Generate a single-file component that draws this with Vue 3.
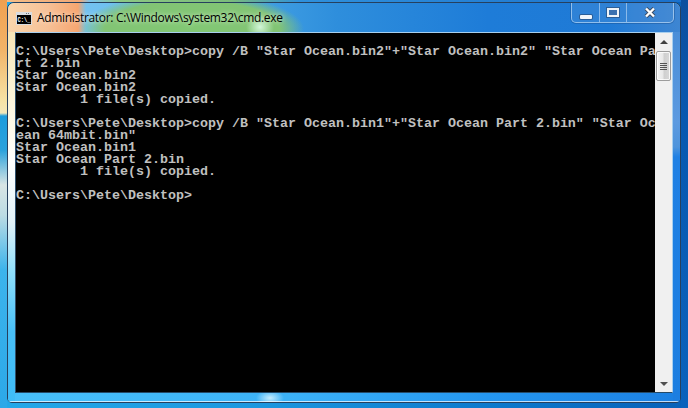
<script setup>
const rows = [
  '',
  'C:\\Users\\Pete\\Desktop>copy /B "Star Ocean.bin2"+"Star Ocean.bin2" "Star Ocean Pa',
  'rt 2.bin',
  'Star Ocean.bin2',
  'Star Ocean.bin2',
  '        1 file(s) copied.',
  '',
  'C:\\Users\\Pete\\Desktop>copy /B "Star Ocean.bin1"+"Star Ocean Part 2.bin" "Star Oc',
  'ean 64mbit.bin"',
  'Star Ocean.bin1',
  'Star Ocean Part 2.bin',
  '        1 file(s) copied.',
  '',
  'C:\\Users\\Pete\\Desktop>'
]
const output = rows.join('\n')
</script>

<template>
  <div class="desktop">
    <div class="window">
      <div class="titlebar">
        <svg class="app-icon" width="16" height="13" viewBox="0 0 16 13">
          <rect x="0" y="0" width="16" height="13" fill="#d8dce0" />
          <rect x="1" y="3" width="14" height="9" fill="#000" />
          <rect x="10" y="1" width="1" height="1" fill="#6a7078" />
          <rect x="12" y="1" width="1" height="1" fill="#6a7078" />
          <text x="1.5" y="10" class="icon-text" textLength="13" lengthAdjust="spacingAndGlyphs">C:\_</text>
        </svg>
        <span class="title">Administrator: C:\Windows\system32\cmd.exe</span>
        <div class="caption">
          <div class="cap cap-min"><span class="min-glyph"></span></div>
          <div class="cap cap-max"><span class="max-glyph"></span></div>
          <div class="cap cap-close">
            <svg width="12" height="11" viewBox="0 0 12 11">
              <path d="M2 1.5 L10 9.5 M10 1.5 L2 9.5" stroke="#3a4a60" stroke-width="4" fill="none" />
              <path d="M2 1.5 L10 9.5 M10 1.5 L2 9.5" stroke="#fff" stroke-width="2.4" fill="none" />
            </svg>
          </div>
        </div>
      </div>
      <div class="body">
        <div class="client">
          <pre class="console">{{ output }}</pre>
          <div class="scrollbar">
            <div class="arrow-btn"><span class="arrow-up"></span></div>
            <div class="thumb">
              <span class="grip"></span><span class="grip"></span><span class="grip"></span><span class="grip"></span>
            </div>
            <div class="track"></div>
            <div class="arrow-btn"><span class="arrow-down"></span></div>
          </div>
        </div>
      </div>
    </div>
  </div>
</template>

<style scoped>
.desktop {
  width: 688px;
  height: 408px;
  box-sizing: border-box;
  padding: 2px 7px 5px 7px;
  overflow: hidden;
  background:
    linear-gradient(180deg, #f0a050 0, #f2b468 50px, #f6e2a4 100px, #f4e8b8 113px, #1c9cdc 116px, #2aa2dc 150px, #d8e4e4 185px, #bcdce4 215px, #3cb4ec 270px, #2ca8e8 408px) left top / 7px 408px no-repeat,
    linear-gradient(180deg, #0d4f9e 0, #0858b0 120px, #0a62bc 408px) right top / 7px 408px no-repeat,
    linear-gradient(90deg, #f4c088 0, #f0a878 80px, #7cc4ee 90px, #8cc884 120px, #7cbc7c 230px, #2f90dc 300px, #1a70cc 688px) left top / 688px 2px no-repeat,
    linear-gradient(90deg, #24a8e8 0, #1c98e0 250px, #0c78cc 500px, #0860b8 688px);
}
.window {
  width: 674px;
  height: 401px;
  box-sizing: border-box;
  display: flex;
  flex-direction: column;
  border: 1px solid #26405e;
  border-radius: 7px 7px 5px 5px;
  box-shadow: inset 0 0 0 1px rgba(255, 255, 255, 0.72);
  overflow: hidden;
}
.titlebar {
  height: 29px;
  flex: none;
  display: flex;
  align-items: flex-start;
  padding: 8px 0 0 8px;
  box-sizing: border-box;
  background:
    radial-gradient(ellipse 14px 12px at 252px 24px, rgba(225, 255, 235, 0.85), rgba(225, 255, 235, 0) 100%),
    radial-gradient(ellipse 112px 36px at 184px 26px, #82c874 0, #82c474 78%, rgba(120, 190, 150, 0) 100%),
    linear-gradient(90deg, #fad6ac 0, #f6c096 40px, #f6a670 70px, #74c2f0 78px, #6cc0f0 110px, #44a2e4 240px, #2e8edc 330px, #1e7cd8 480px, #1f7ad6 600px, #3f86d2 674px);
}
.app-icon {
  flex: none;
  margin-top: 1px;
}
.icon-text {
  font-family: "Liberation Mono", monospace;
  font-size: 6.5px;
  font-weight: 700;
  fill: #fff;
}
.title {
  margin-left: 5px;
  margin-top: -1px;
  font-family: "Open Sans", sans-serif;
  font-size: 12px;
  line-height: 16px;
  letter-spacing: -0.32px;
  color: #000;
  white-space: nowrap;
  text-shadow: 0 0 5px rgba(255, 255, 255, 0.8);
}
.caption {
  margin-left: auto;
  margin-top: -8px;
  margin-right: 6px;
  width: 103px;
  height: 20px;
  display: flex;
  box-sizing: border-box;
  border: 1px solid rgba(225, 240, 255, 0.55);
  border-top: 0;
  border-radius: 0 0 5px 5px;
  background: rgba(90, 150, 215, 0.28);
  box-shadow: 0 0 0 1px rgba(20, 70, 130, 0.35);
}
.cap {
  height: 100%;
  display: flex;
  align-items: center;
  justify-content: center;
  box-sizing: border-box;
}
.cap-min {
  width: 28px;
  border-right: 1px solid rgba(225, 240, 255, 0.5);
}
.cap-max {
  width: 27px;
  border-right: 1px solid rgba(225, 240, 255, 0.5);
}
.cap-close {
  flex: 1;
}
.min-glyph {
  display: block;
  width: 12px;
  height: 4px;
  margin-top: 8px;
  background: #f2f6fa;
  box-shadow: 0 0 0 1px rgba(40, 70, 110, 0.6);
  border-radius: 1px;
}
.max-glyph {
  display: block;
  width: 12px;
  height: 9px;
  box-sizing: border-box;
  border: 2px solid #eef3f8;
  background: #3a70b0;
  box-shadow: 0 0 0 1px rgba(40, 70, 110, 0.6);
}
.body {
  flex: 1;
  min-height: 0;
  padding: 0 7px 9px 7px;
  box-sizing: border-box;
  background:
    linear-gradient(180deg, #f8e6b8 0, #fdf6dc 70px, #ffffff 130px, #e2f2f8 190px, #8fe0fc 240px, #48c0f8 300px, #3fbdf8 371px) left top / 7px 100% no-repeat,
    linear-gradient(180deg, #4a8ed8 0, #5c9ae0 90px, #4e94dc 115px, #1f80e4 125px, #1c7ee0 371px) right top / 7px 100% no-repeat,
    radial-gradient(ellipse 14px 8px at 262px 366px, rgba(230, 250, 255, 0.8), rgba(230, 250, 255, 0) 100%),
    linear-gradient(90deg, #48c0fa 0, #3cb2f8 280px, #2496f0 480px, #1c80e2 672px);
  box-shadow: inset 0 -1px 0 rgba(255, 255, 255, 0.72);
}
.client {
  height: 100%;
  display: flex;
  box-sizing: border-box;
  border: 1px solid #a8cfee;
  border-left-color: #30506c;
  border-bottom-color: #254a68;
  background: #000;
}
.console {
  flex: 1;
  min-width: 0;
  margin: 0;
  padding: 1px 0 0 0;
  overflow: hidden;
  font-family: "Liberation Mono", monospace;
  font-size: 13.333px;
  font-weight: 700;
  line-height: 12px;
  color: #c0c0c0;
  white-space: pre;
}
.scrollbar {
  width: 17px;
  flex: none;
  display: flex;
  flex-direction: column;
  background: #f0f0f0;
}
.arrow-btn {
  height: 17px;
  flex: none;
  display: flex;
  align-items: center;
  justify-content: center;
}
.arrow-up {
  width: 0;
  height: 0;
  border-left: 4px solid transparent;
  border-right: 4px solid transparent;
  border-bottom: 4px solid #404040;
}
.arrow-down {
  width: 0;
  height: 0;
  border-left: 4px solid transparent;
  border-right: 4px solid transparent;
  border-top: 4px solid #505050;
}
.thumb {
  height: 30px;
  flex: none;
  margin: 1px 1px 0 1px;
  box-sizing: border-box;
  border: 1px solid #9c9c9c;
  border-radius: 2px;
  background: linear-gradient(90deg, #f4f4f4 0, #e8e8e8 45%, #cfcfcf 55%, #d8d8d8 100%);
  box-shadow: inset 0 0 0 1px rgba(255, 255, 255, 0.8);
  display: flex;
  flex-direction: column;
  align-items: center;
  justify-content: center;
  gap: 1px;
}
.grip {
  display: block;
  width: 7px;
  height: 1px;
  background: #555;
}
.track {
  flex: 1;
}
</style>
